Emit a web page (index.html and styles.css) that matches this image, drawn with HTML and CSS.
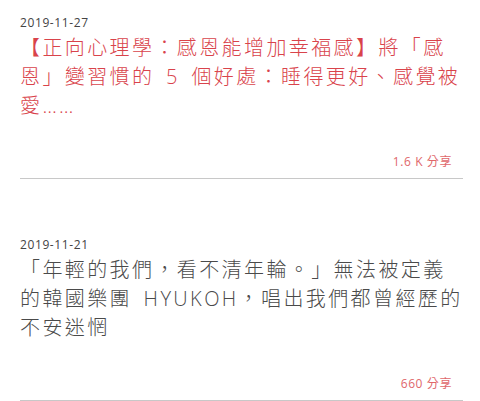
FILE: index.html
```html
<!DOCTYPE html>
<html lang="zh-TW">
<head>
  <meta charset="UTF-8">
  <title>文章列表</title>
  <link rel="stylesheet" href="styles.css">
</head>
<body>

<div class="list">
  <div class="item">
    <div class="date">2019-11-27</div>
    <a class="title hot" href="#">【正向心理學：感恩能增加幸福感】將「感恩」變習慣的 5 個好處：睡得更好、感覺被愛……</a>
    <div class="share">1.6 K 分享</div>
  </div>
  <div class="item">
    <div class="date">2019-11-21</div>
    <a class="title" href="#">「年輕的我們，看不清年輪。」無法被定義的韓國樂團 HYUKOH，唱出我們都曾經歷的不安迷惘</a>
    <div class="share">660 分享</div>
  </div>
</div>

</body>
</html>
```

FILE: styles.css
```css
body {
  margin: 0;
  padding: 0 17px 0 20px;
  background: #fff;
  font-family: "Open Sans", "Noto Sans CJK TC", sans-serif;
  color: #444;
}
.item {
  padding: 15px 0 8px;
  border-bottom: 1px solid #c8c8c8;
  margin-bottom: 43px;
}
.date {
  font-size: 12px;
  line-height: 16px;
  letter-spacing: 0.6px;
  color: #444;
}
.title {
  display: block;
  margin-top: 2px;
  font-size: 20px;
  line-height: 29px;
  letter-spacing: 2.4px;
  word-spacing: 4px;
  font-weight: 300;
  color: #4a4a4a;
  text-decoration: none;
}
.title.hot {
  color: #d9434b;
}
.share {
  margin-top: 34px;
  padding-right: 11px;
  text-align: right;
  font-size: 12px;
  line-height: 16px;
  letter-spacing: 0.6px;
  color: #e0676b;
}
```
